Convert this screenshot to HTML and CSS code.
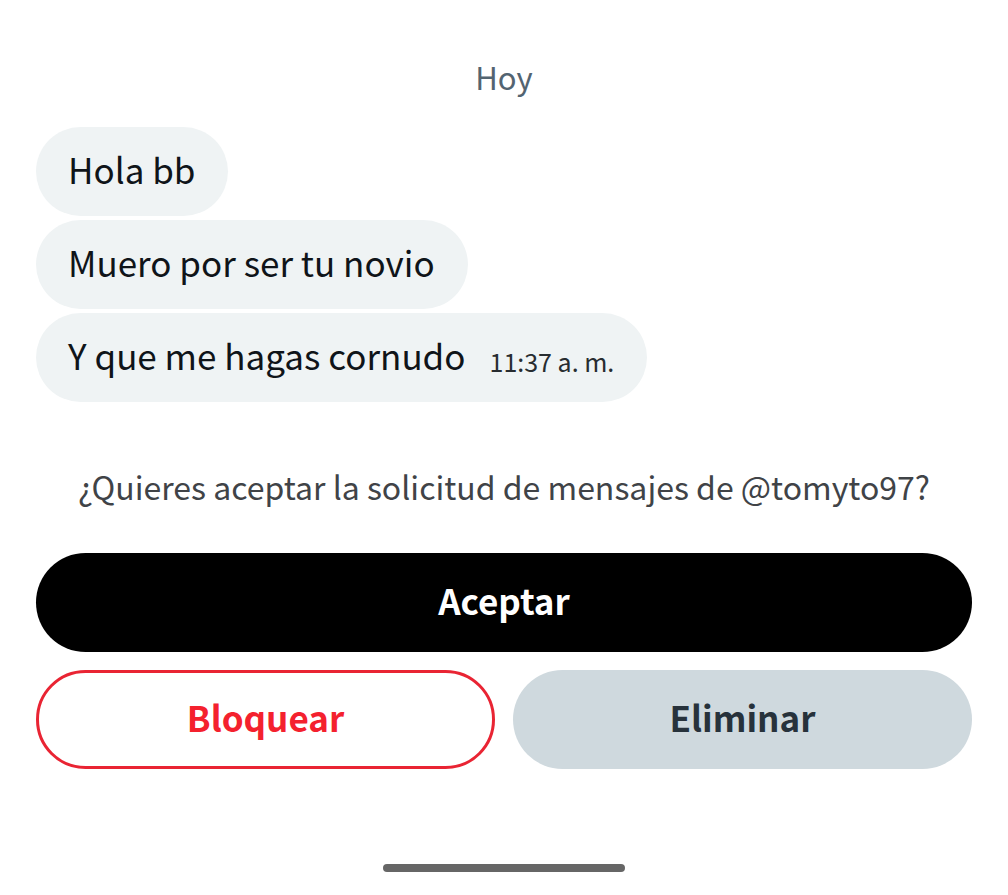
FILE: index.html
```html
<!DOCTYPE html>
<html lang="es">
<head>
  <meta charset="UTF-8" />
  <meta name="viewport" content="width=device-width, initial-scale=1.0" />
  <title>Solicitud de mensajes</title>
  <link rel="stylesheet" href="styles.css">
</head>
<body>
  <main class="chat">
    <!-- Mensajes -->
    <p class="day">Hoy</p>
    <div class="messages">
      <div class="bubble">Hola bb</div>
      <div class="bubble">Muero por ser tu novio</div>
      <div class="bubble">Y que me hagas cornudo <span class="time">11:37 a. m.</span></div>
    </div>

    <!-- Solicitud -->
    <p class="question">¿Quieres aceptar la solicitud de mensajes de @tomyto97?</p>
    <div class="actions">
      <button type="button" class="btn btn-accept">Aceptar</button>
      <button type="button" class="btn btn-block">Bloquear</button>
      <button type="button" class="btn btn-delete">Eliminar</button>
    </div>
  </main>
  <div class="home-bar"></div>
</body>
</html>
```

FILE: styles.css
```css
* { box-sizing:border-box; }
body { margin:0; min-height:100vh; display:flex; flex-direction:column; background:#fff; color:#0f1419; font-family:'Noto Sans CJK SC','Liberation Sans',sans-serif; }
.chat { padding:53px 36px 0; }
.day { margin:0 0 26px; text-align:center; font-size:31px; line-height:48px; color:#536471; }

.messages { display:flex; flex-direction:column; align-items:flex-start; gap:4px; }
.bubble { display:flex; align-items:flex-end; gap:24px; padding:17px 33px 23px 32px; border-radius:45px; background:#eff3f4; font-size:35px; line-height:49px; }
.time { font-size:25px; line-height:36px; color:#272c30; }

.question { margin:60px 0 42px; text-align:center; font-size:32px; line-height:49px; color:#404347; }
.actions { display:grid; grid-template-columns:1fr 1fr; gap:18px; }
.btn { height:99px; padding:0 16px 6px; border:none; border-radius:50px; font-family:inherit; font-size:35px; font-weight:700; cursor:pointer; }
.btn-accept { grid-column:span 2; background:#000; color:#fff; }
.btn-block { border:3px solid #e92433; background:#fff; color:#f4212e; }
.btn-delete { background:#cfd9de; color:#27323b; }

.home-bar { width:24%; height:8px; margin:auto auto 23px; border-radius:4px; background:#666; }
```
